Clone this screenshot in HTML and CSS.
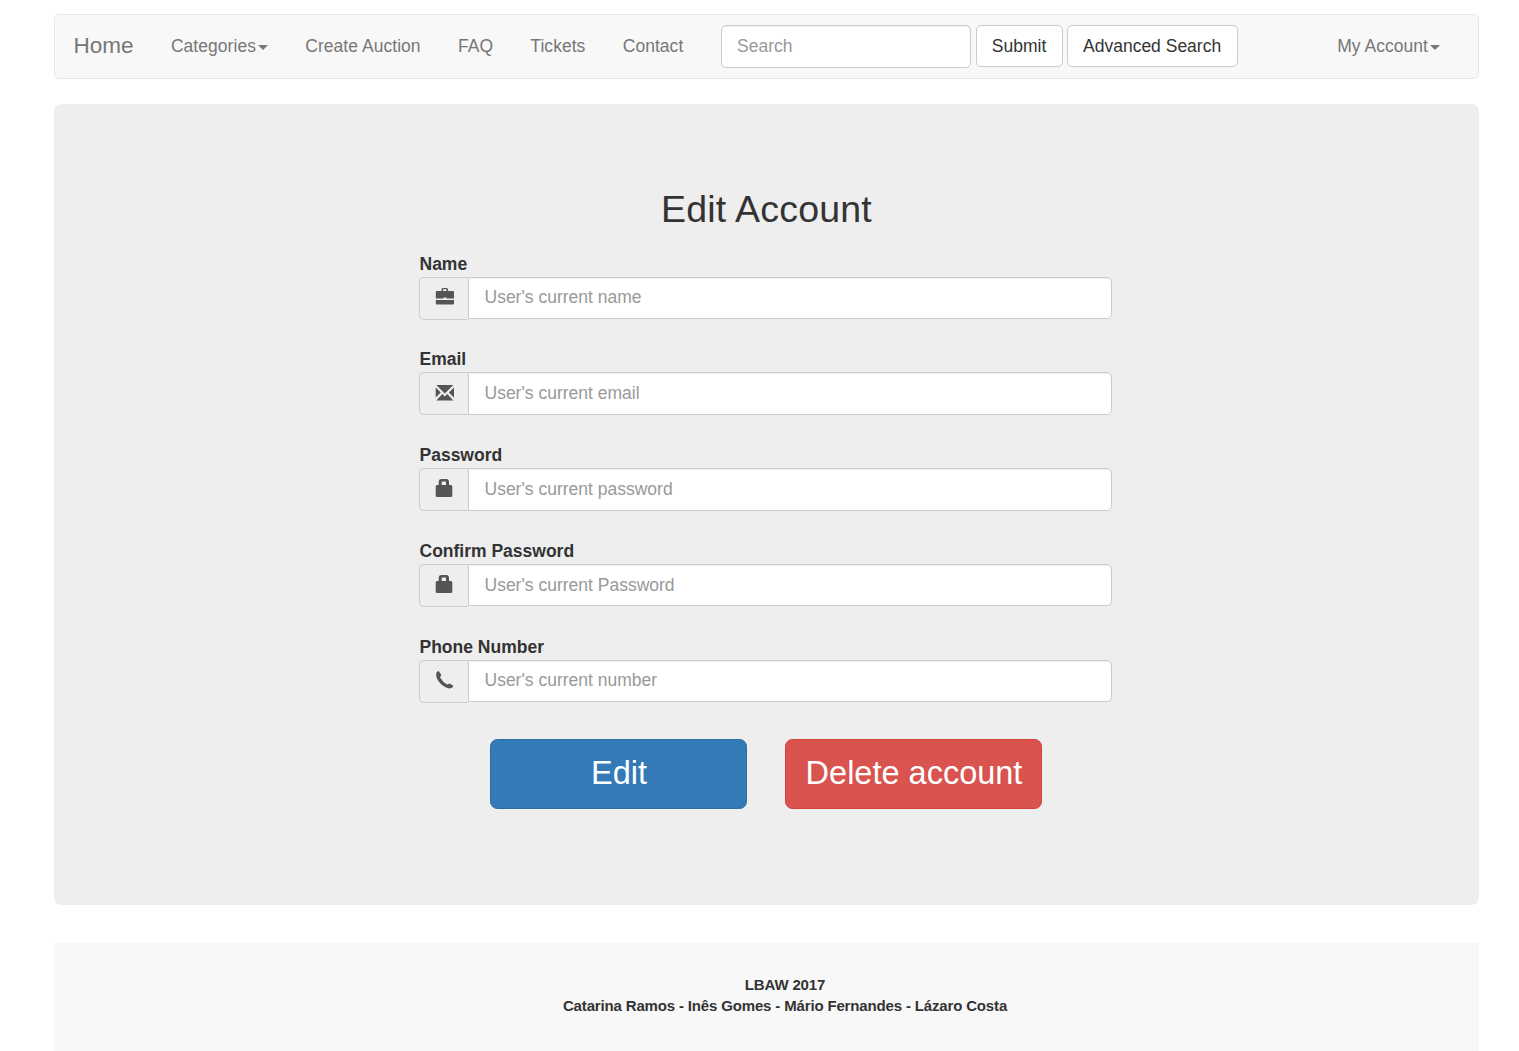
FILE: index.html
```html
<!DOCTYPE html>
<html lang="en">
<head>
<meta charset="utf-8">
<title>Edit Account</title>
<link rel="stylesheet" href="styles.css">
</head>
<body>
<nav class="navbar">
  <a class="brand">Home</a>
  <a class="nav-link">Categories<span class="caret"></span></a>
  <a class="nav-link">Create Auction</a>
  <a class="nav-link">FAQ</a>
  <a class="nav-link">Tickets</a>
  <a class="nav-link">Contact</a>
  <form class="search">
    <input class="control search-input" type="text" placeholder="Search">
    <button class="btn submit" type="button">Submit</button>
    <button class="btn advanced" type="button">Advanced Search</button>
  </form>
  <a class="nav-link account">My Account<span class="caret"></span></a>
</nav>
<main class="panel">
  <h2 class="title">Edit Account</h2>
  <form class="form">
    <div class="group">
      <label class="label" for="name">Name</label>
      <div class="field">
        <span class="addon"><svg class="icon" viewBox="0 0 20 20"><path fill-rule="evenodd" d="M6.500 4V2.500Q6.500 1 8 1h3.500Q13 1 13 2.500V4h5q1 0 1 1v6.500h-7.500v-1h-3v1H.800V5q0-1 1-1zM8 4h3.500V2.300H8zM.8 13H19v3.500q0 1-1 1H1.800q-1 0-1-1z"/></svg></span>
        <input class="control" id="name" type="text" placeholder="User's current name">
      </div>
    </div>
    <div class="group">
      <label class="label" for="email">Email</label>
      <div class="field">
        <span class="addon"><svg class="icon" viewBox="0 0 20 20"><path d="M1.300 3h17L9.800 11.500zM.7 5.500l5.100 5.100L.7 15.500zM19 5.500v10l-5.200-4.900zM1.300 18.500l6-6.400 2.500 2.400 2.500-2.400 6 6.400z"/></svg></span>
        <input class="control" id="email" type="text" placeholder="User's current email">
      </div>
    </div>
    <div class="group">
      <label class="label" for="password">Password</label>
      <div class="field">
        <span class="addon"><svg class="icon" viewBox="0 0 20 20"><path fill-rule="evenodd" d="M3.700 7V3.300Q4 1 6.300 1h5Q13.700 1 14 3.300V7h2.300l1 1v10l-1 1H1.700l-1-1V8l1-1zM6.700 7H11V4.300Q11 3.500 10.300 3.500H7.500Q6.700 3.500 6.700 4.300z"/></svg></span>
        <input class="control" id="password" type="text" placeholder="User's current password">
      </div>
    </div>
    <div class="group">
      <label class="label" for="confirm">Confirm Password</label>
      <div class="field">
        <span class="addon"><svg class="icon" viewBox="0 0 20 20"><path fill-rule="evenodd" d="M3.700 7V3.300Q4 1 6.300 1h5Q13.700 1 14 3.300V7h2.300l1 1v10l-1 1H1.700l-1-1V8l1-1zM6.700 7H11V4.300Q11 3.500 10.300 3.500H7.500Q6.700 3.500 6.700 4.300z"/></svg></span>
        <input class="control" id="confirm" type="text" placeholder="User's current Password">
      </div>
    </div>
    <div class="group">
      <label class="label" for="phone">Phone Number</label>
      <div class="field">
        <span class="addon"><svg class="icon" viewBox="0 0 20 20"><path d="M1.200 3.500Q1.700 1.400 3.700 1l2.700 4-1.400 2.200Q7.500 12 12.200 14.600l2.300-1.200 3.900 2.400q-.8 2.500-3.500 2.700C8.300 18 .2 10 1.200 3.500z"/></svg></span>
        <input class="control" id="phone" type="text" placeholder="User's current number">
      </div>
    </div>
  </form>
  <div class="actions">
    <button class="action primary" type="button">Edit</button>
    <button class="action danger" type="button">Delete account</button>
  </div>
</main>
<footer class="footer">
  <div>LBAW 2017</div>
  <div>Catarina Ramos - Inês Gomes - Mário Fernandes - Lázaro Costa</div>
</footer>
</body>
</html>
```
FILE: styles.css
```css
* {
  box-sizing: border-box;
}
body {
  margin: 0;
  padding: 14px 40px 0 54px;
  height: 1051px;
  overflow: hidden;
  background: #fff;
  color: #333;
  font: 17.5px/25px "Liberation Sans", Arial, sans-serif;
}
input,
button {
  margin: 0;
  font: inherit;
}
.navbar {
  display: flex;
  align-items: flex-start;
  height: 65px;
  padding: 10px 19px 0 18.4px;
  border: 1px solid #e7e7e7;
  border-radius: 5px;
  background: #f8f8f8;
  color: #777;
}
.brand,
.nav-link {
  line-height: 42px;
  white-space: nowrap;
}
.brand {
  font-size: 22.5px;
  margin-right: 37.5px;
}
.nav-link {
  margin-right: 37.300px;
  letter-spacing: .04px;
}
.caret {
  display: inline-block;
  margin-left: 2px;
  vertical-align: middle;
  border-top: 5px solid;
  border-left: 5px solid transparent;
  border-right: 5px solid transparent;
}
.search {
  display: flex;
  align-items: flex-start;
}
.control {
  flex: 1;
  min-width: 0;
  height: 42.5px;
  padding: 0 15.5px;
  border: 1px solid #ccc;
  border-radius: 5px;
  background: #fff;
  box-shadow: inset 0 1px 1px rgba(0, 0, 0, .075);
  color: #555;
}
.control::placeholder {
  color: #999;
  opacity: 1;
}
.search-input {
  flex: none;
  width: 250px;
  height: 43px;
  margin-right: 5px;
}
.btn {
  height: 42px;
  padding: 1px 0 0;
  border: 1px solid #ccc;
  border-radius: 5px;
  background: #fff;
  color: #333;
}
.submit {
  width: 87px;
  margin-right: 4px;
}
.advanced {
  width: 171px;
}
.account {
  margin-left: auto;
  margin-right: 19px;
}
.panel {
  height: 801px;
  margin-top: 25px;
  padding-top: 83px;
  border-radius: 7.5px;
  background: #eee;
}
.title {
  margin: 0;
  font-size: 37.5px;
  font-weight: 500;
  line-height: 44px;
  letter-spacing: .2px;
  text-align: center;
}
.form {
  width: 693px;
  margin: 20.55px 0 0 365px;
}
.group {
  height: 95.8px;
}
.label {
  display: block;
  height: 25px;
  padding-left: .5px;
  font-weight: 700;
}
.field {
  display: flex;
  align-items: flex-start;
}
.addon {
  display: flex;
  justify-content: center;
  width: 49px;
  height: 43px;
  padding: 9px 0 0 1px;
  border: 1px solid #ccc;
  border-right: 0;
  border-radius: 5px 0 0 5px;
  background: #eee;
}
.icon {
  width: 20px;
  height: 20px;
  fill: #555;
}
.field .control {
  border-radius: 0 5px 5px 0;
}
.actions {
  display: flex;
  gap: 38px;
  margin: 8.45px 0 0 436px;
}
.action {
  width: 257px;
  height: 70px;
  padding: 0 0 0 1px;
  border: 1px solid #2e6da4;
  border-radius: 7.5px;
  background: #337ab7;
  color: #fff;
  font-size: 32.5px;
}
.danger {
  border-color: #d43f3a;
  background: #d9534f;
}
.footer {
  height: 108px;
  margin-top: 38px;
  padding: 31px 0 0 37px;
  background: #f8f8f8;
  font-size: 15px;
  font-weight: 700;
  line-height: 21.4px;
  letter-spacing: -.155px;
  text-align: center;
}
```
